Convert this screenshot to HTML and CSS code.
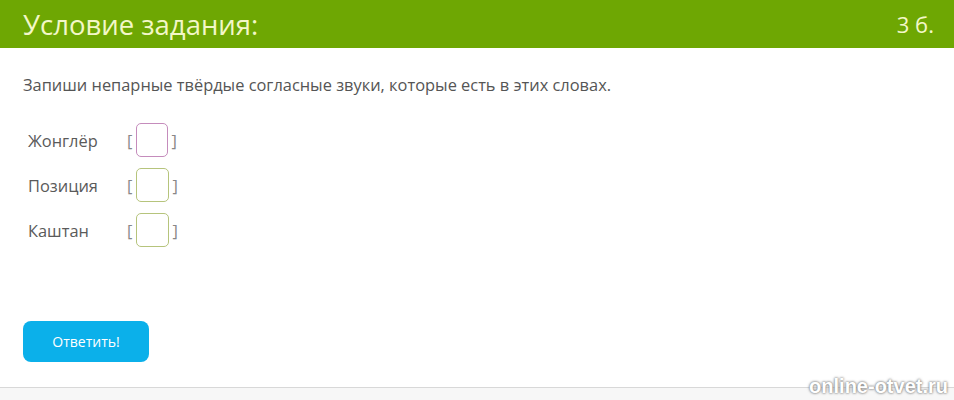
FILE: index.html
```html
<!DOCTYPE html>
<html lang="ru">
<head>
  <meta charset="UTF-8">
  <title>Условие задания</title>
  <link rel="stylesheet" href="styles.css">
</head>
<body>
  <div class="task-head">
    <span class="task-title">Условие задания:</span>
    <span class="task-score">3 б.</span>
  </div>

  <div class="task-body">
    <p class="task-text">Запиши непарные твёрдые согласные звуки, которые есть в этих словах.</p>

    <div class="words">
      <div class="word-row">
        <span class="word">Жонглёр</span>
        <span class="br">[</span><input class="cell cell-active" type="text"><span class="br">]</span>
      </div>
      <div class="word-row">
        <span class="word">Позиция</span>
        <span class="br">[</span><input class="cell" type="text"><span class="br">]</span>
      </div>
      <div class="word-row">
        <span class="word">Каштан</span>
        <span class="br">[</span><input class="cell" type="text"><span class="br">]</span>
      </div>
    </div>

    <button class="answer-btn">Ответить!</button>
  </div>

  <div class="task-foot">
    <span class="mark">online-otvet.ru</span>
  </div>
</body>
</html>
```

FILE: styles.css
```css
body {
  margin: 0;
  font-family: "Open Sans", sans-serif;
  background: #fff;
  color: #555;
}
.task-head {
  background: #6ea703;
  height: 48px;
  padding: 0 20px 0 23px;
  display: flex;
  align-items: center;
  justify-content: space-between;
  color: #f3f7c8;
}
.task-title { font-size: 27.5px; }
.task-score { font-size: 22px; }

.task-body {
  box-sizing: border-box;
  height: 340px;
  padding: 26px 23px 0;
  border-bottom: 1px solid #d8d8d8;
}
.task-text {
  margin: 0 0 27px;
  font-size: 16.4px;
  line-height: 22px;
}
.words {
  display: flex;
  flex-direction: column;
  gap: 11px;
  padding-left: 5px;
}
.word-row {
  display: flex;
  align-items: center;
  height: 34px;
  font-size: 16.4px;
  color: #5a5a5a;
}
.word { width: 99px; }
.br { color: #888; }
.cell {
  box-sizing: border-box;
  width: 33px;
  height: 34px;
  margin: 0 3px 0 4px;
  border: 1.5px solid #b6c47c;
  border-radius: 5px;
  background: #fff;
  outline: none;
}
.cell-active { border-color: #c58cbc; width: 32px; }

.answer-btn {
  margin-top: 74px;
  width: 126px;
  height: 41px;
  border: none;
  border-radius: 8px;
  background: #0bb0ea;
  color: #fff;
  font-family: "Open Sans", sans-serif;
  font-size: 14px;
  cursor: pointer;
}

.task-foot {
  background: #f7f7f7;
  height: 13px;
  position: relative;
}
.mark {
  position: absolute;
  right: 6px;
  bottom: 3px;
  font-family: "Liberation Sans", sans-serif;
  font-weight: bold;
  font-size: 20px;
  color: #fff;
  text-shadow: 0 0 3px #777, 0 0 2px #999;
}
```
